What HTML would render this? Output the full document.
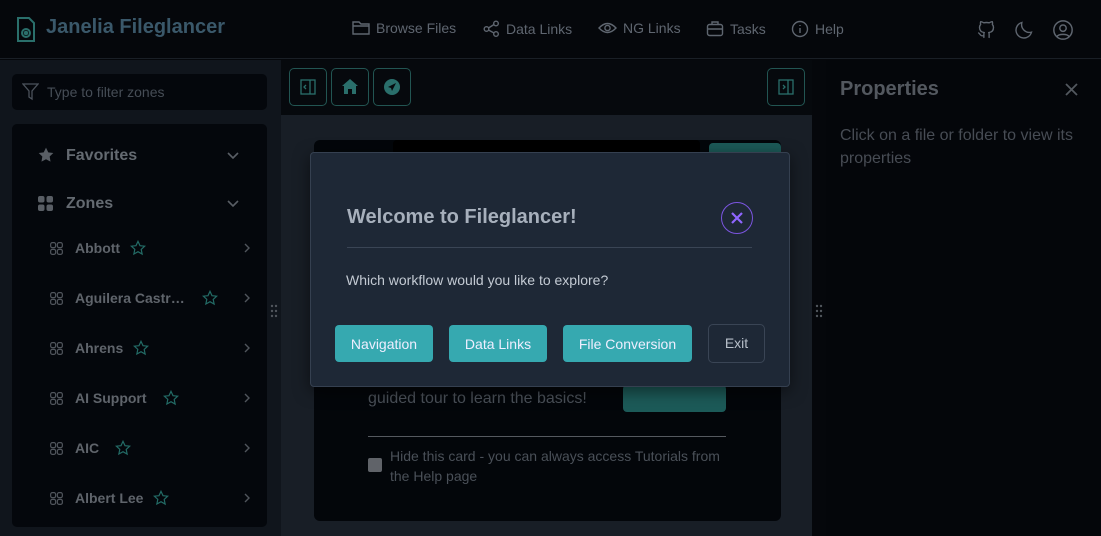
<!DOCTYPE html>
<html><head><meta charset="utf-8"><style>
*{box-sizing:border-box;margin:0;padding:0}
body{width:1101px;height:536px;overflow:hidden;background:#05070b;font-family:"Liberation Sans",sans-serif;position:relative}
.a{position:absolute}
.nav{color:#5f6670;font-size:14px;display:flex;align-items:center;gap:6px}
svg{display:block}
.zone{position:absolute;left:50px;width:210px;height:20px;display:flex;align-items:center;color:#5f646b;font-weight:bold;font-size:14px}
.zone svg{margin-right:12px}
.btn{position:absolute;top:325px;height:37px;background:#36a9b0;color:#eef;border-radius:4px;font-size:14px;display:flex;align-items:center;justify-content:center}
.chev{position:absolute;left:244px}
</style></head><body>
<div class="a" style="left:0;top:0;width:1101px;height:59px;background:#05070b;border-bottom:1px solid #1a1f26"></div>
<svg class="a" style="left:16px;top:16px" width="20" height="27" viewBox="0 0 20 27" fill="none" stroke="#2a6f6b" stroke-width="2"><path d="M2 2h11l5 5v18H2z"/><circle cx="10" cy="17" r="4"/><circle cx="10" cy="17" r="1.3" fill="#2a6f6b"/></svg>
<div class="a" style="left:46px;top:16px;font-size:20px;font-weight:bold;color:#3a586a">Janelia Fileglancer</div>
<div class="a nav" style="left:352px;top:20px"><svg width="18" height="16" viewBox="0 0 18 16" fill="none" stroke="#5f6670" stroke-width="1.4"><path d="M1 2h6l2 2h8v10H1z M1 6h16"/></svg>Browse Files</div>
<div class="a nav" style="left:483px;top:20px"><svg width="17" height="17" viewBox="0 0 17 17" fill="none" stroke="#5f6670" stroke-width="1.4"><circle cx="3.5" cy="9" r="2.3"/><circle cx="13" cy="3.5" r="2.3"/><circle cx="13" cy="14" r="2.3"/><path d="M5.5 8l5.5-3.5M5.5 10l5.5 3"/></svg>Data Links</div>
<div class="a nav" style="left:598px;top:20px"><svg width="19" height="16" viewBox="0 0 19 16" fill="none" stroke="#5f6670" stroke-width="1.4"><path d="M1 8q8.5-9 17 0q-8.5 9-17 0z"/><circle cx="9.5" cy="8" r="2.6"/></svg>NG Links</div>
<div class="a nav" style="left:706px;top:20px"><svg width="18" height="17" viewBox="0 0 18 17" fill="none" stroke="#5f6670" stroke-width="1.4"><rect x="1.5" y="4.5" width="15" height="11" rx="2"/><path d="M6 4.5V2h6v2.5M1.5 9h15"/></svg>Tasks</div>
<div class="a nav" style="left:791px;top:20px"><svg width="18" height="18" viewBox="0 0 18 18" fill="none" stroke="#5f6670" stroke-width="1.4"><circle cx="9" cy="9" r="7.5"/><path d="M9 8v5M9 5v1"/></svg>Help</div>
<svg class="a" style="left:976px;top:19px" width="21" height="21" viewBox="0 0 24 24" fill="none" stroke="#5f6670" stroke-width="1.6" stroke-linecap="round" stroke-linejoin="round"><path d="M9 19c-4.3 1.4-4.3-2.5-6-3m12 5v-3.5c0-1 .1-1.4-.5-2 2.8-.3 5.5-1.4 5.5-6a4.6 4.6 0 00-1.3-3.2 4.2 4.2 0 00-.1-3.2s-1.1-.3-3.5 1.3a12.3 12.3 0 00-6.2 0C6.5 2.8 5.4 3.1 5.4 3.1a4.2 4.2 0 00-.1 3.2A4.6 4.6 0 004 9.5c0 4.6 2.7 5.7 5.5 6-.6.6-.6 1.2-.5 2V21"/></svg>
<svg class="a" style="left:1014px;top:19px" width="21" height="21" viewBox="0 0 24 24" fill="none" stroke="#5f6670" stroke-width="1.6"><path d="M20 15A9 9 0 019 4a9 9 0 1011 11z"/></svg>
<svg class="a" style="left:1052px;top:19px" width="22" height="22" viewBox="0 0 24 24" fill="none" stroke="#5f6670" stroke-width="1.6"><circle cx="12" cy="12" r="10"/><circle cx="12" cy="10" r="3.5"/><path d="M5.5 19c2-3 11-3 13 0"/></svg>
<div class="a" style="left:0;top:60px;width:281px;height:476px;background:#10151c"></div>
<div class="a" style="left:12px;top:74px;width:255px;height:36px;background:#04070c;border-radius:5px"></div>
<svg class="a" style="left:22px;top:83px" width="17" height="18" viewBox="0 0 17 18" fill="none" stroke="#4b525b" stroke-width="1.3"><path d="M1 1h15l-6 7v8l-3-2V8z"/></svg>
<div class="a" style="left:47px;top:84px;font-size:14px;color:#464d56">Type to filter zones</div>
<div class="a" style="left:12px;top:124px;width:255px;height:403px;background:#04070c;border-radius:5px"></div>
<svg class="a" style="left:38px;top:147px" width="16" height="16" viewBox="0 0 24 24" fill="#595e65"><path d="M12 1l3.4 7 7.6 1-5.5 5.3 1.3 7.7L12 18.3 5.2 22l1.3-7.7L1 9l7.6-1z"/></svg>
<div class="a" style="left:66px;top:147px;color:#646a71;font-size:16px;font-weight:bold">Favorites</div>
<svg class="a" style="left:227px;top:152px" width="12" height="8" viewBox="0 0 12 8" fill="none" stroke="#595e65" stroke-width="1.6"><path d="M1 1l5 5 5-5"/></svg>
<svg class="a" style="left:38px;top:196px" width="15" height="15" viewBox="0 0 15 15" fill="#595e65"><rect width="6.5" height="6.5" rx="2"/><rect x="8.5" width="6.5" height="6.5" rx="2"/><rect y="8.5" width="6.5" height="6.5" rx="2"/><rect x="8.5" y="8.5" width="6.5" height="6.5" rx="2"/></svg>
<div class="a" style="left:66px;top:195px;color:#646a71;font-size:16px;font-weight:bold">Zones</div>
<svg class="a" style="left:227px;top:200px" width="12" height="8" viewBox="0 0 12 8" fill="none" stroke="#595e65" stroke-width="1.6"><path d="M1 1l5 5 5-5"/></svg>
<svg width="0" height="0" style="position:absolute"><defs>
<symbol id="g" viewBox="0 0 12 12"><g fill="none" stroke="#50555c" stroke-width="1.1"><rect x=".6" y=".6" width="4.6" height="4.6" rx="1.5"/><rect x="6.8" y=".6" width="4.6" height="4.6" rx="1.5"/><rect x=".6" y="6.8" width="4.6" height="4.6" rx="1.5"/><rect x="6.8" y="6.8" width="4.6" height="4.6" rx="1.5"/></g></symbol>
<symbol id="s" viewBox="0 0 24 24"><path d="M12 2l3 6.5 7 .8-5.2 4.8 1.4 7L12 17.6 5.8 21l1.4-7L2 9.3l7-.8z" fill="none" stroke="#236b66" stroke-width="1.8"/></symbol>
</defs></svg>
<div class="zone" style="top:238px"><svg width="13" height="13"><use href="#g"/></svg>Abbott<svg width="16" height="16" style="margin-left:10px"><use href="#s"/></svg></div>
<div class="zone" style="top:288px"><svg width="13" height="13"><use href="#g"/></svg>Aguilera Castr…<svg width="16" height="16" style="margin-left:17px"><use href="#s"/></svg></div>
<div class="zone" style="top:338px"><svg width="13" height="13"><use href="#g"/></svg>Ahrens<svg width="16" height="16" style="margin-left:10px"><use href="#s"/></svg></div>
<div class="zone" style="top:388px"><svg width="13" height="13"><use href="#g"/></svg>AI Support<svg width="16" height="16" style="margin-left:16px"><use href="#s"/></svg></div>
<div class="zone" style="top:438px"><svg width="13" height="13"><use href="#g"/></svg>AIC<svg width="16" height="16" style="margin-left:16px"><use href="#s"/></svg></div>
<div class="zone" style="top:488px"><svg width="13" height="13"><use href="#g"/></svg>Albert Lee<svg width="16" height="16" style="margin-left:10px"><use href="#s"/></svg></div>
<svg class="chev" style="top:243px" width="6" height="10" viewBox="0 0 6 10" fill="none" stroke="#50555c" stroke-width="1.4"><path d="M1 1l4 4-4 4"/></svg>
<svg class="chev" style="top:293px" width="6" height="10" viewBox="0 0 6 10" fill="none" stroke="#50555c" stroke-width="1.4"><path d="M1 1l4 4-4 4"/></svg>
<svg class="chev" style="top:343px" width="6" height="10" viewBox="0 0 6 10" fill="none" stroke="#50555c" stroke-width="1.4"><path d="M1 1l4 4-4 4"/></svg>
<svg class="chev" style="top:393px" width="6" height="10" viewBox="0 0 6 10" fill="none" stroke="#50555c" stroke-width="1.4"><path d="M1 1l4 4-4 4"/></svg>
<svg class="chev" style="top:443px" width="6" height="10" viewBox="0 0 6 10" fill="none" stroke="#50555c" stroke-width="1.4"><path d="M1 1l4 4-4 4"/></svg>
<svg class="chev" style="top:493px" width="6" height="10" viewBox="0 0 6 10" fill="none" stroke="#50555c" stroke-width="1.4"><path d="M1 1l4 4-4 4"/></svg>
<svg class="a" style="left:270px;top:304px" width="8" height="14" fill="#50555c"><circle cx="2" cy="2" r="1.2"/><circle cx="6" cy="2" r="1.2"/><circle cx="2" cy="7" r="1.2"/><circle cx="6" cy="7" r="1.2"/><circle cx="2" cy="12" r="1.2"/><circle cx="6" cy="12" r="1.2"/></svg>
<div class="a" style="left:281px;top:60px;width:531px;height:476px;background:#181e26"></div>
<div class="a" style="left:281px;top:60px;width:531px;height:55px;background:#06090d"></div>
<div class="a" style="left:289px;top:68px;width:38px;height:38px;border:1px solid #225552;border-radius:5px"></div>
<svg class="a" style="left:300px;top:79px" width="16" height="16" viewBox="0 0 16 16" fill="none" stroke="#2a6f6b" stroke-width="1.3"><rect x="1" y="1" width="14" height="14"/><path d="M10 1v14M6 6l-2 2 2 2"/></svg>
<div class="a" style="left:331px;top:68px;width:38px;height:38px;border:1px solid #225552;border-radius:5px"></div>
<svg class="a" style="left:342px;top:79px" width="16" height="15" viewBox="0 0 16 15" fill="#2a6f6b"><path d="M8 0l8 7h-2v8h-4v-5H6v5H2V7H0z"/></svg>
<div class="a" style="left:373px;top:68px;width:38px;height:38px;border:1px solid #225552;border-radius:5px"></div>
<svg class="a" style="left:384px;top:79px" width="16" height="16" viewBox="0 0 16 16"><circle cx="8" cy="8" r="8" fill="#2a6f6b"/><path d="M4 8l8-4-4 8-1-3z" fill="#06090d"/></svg>
<div class="a" style="left:767px;top:68px;width:38px;height:38px;border:1px solid #225552;border-radius:5px"></div>
<svg class="a" style="left:778px;top:79px" width="16" height="16" viewBox="0 0 16 16" fill="none" stroke="#2a6f6b" stroke-width="1.3"><rect x="1" y="1" width="14" height="14"/><path d="M10 1v14M5 6l2 2-2 2"/></svg>
<div class="a" style="left:314px;top:140px;width:467px;height:381px;background:#03060a;border-radius:6px"></div>
<div class="a" style="left:393px;top:140px;width:307px;height:20px;background:#000;border-radius:4px"></div>
<div class="a" style="left:709px;top:143px;width:72px;height:20px;background:#1c5a58;border-radius:4px"></div>
<div class="a" style="left:623px;top:385px;width:103px;height:27px;background:#1c5a58;border-radius:4px"></div>
<div class="a" style="left:368px;top:390px;font-size:16px;color:#4a5058">guided tour to learn the basics!</div>
<div class="a" style="left:368px;top:436px;width:358px;height:1px;background:#55595f"></div>
<div class="a" style="left:368px;top:458px;width:14px;height:14px;background:#606369;border-radius:2px"></div>
<div class="a" style="left:390px;top:446px;font-size:14px;color:#4a5058;line-height:20px;width:340px">Hide this card - you can always access Tutorials from the Help page</div>
<svg class="a" style="left:815px;top:304px" width="8" height="14" fill="#50555c"><circle cx="2" cy="2" r="1.2"/><circle cx="6" cy="2" r="1.2"/><circle cx="2" cy="7" r="1.2"/><circle cx="6" cy="7" r="1.2"/><circle cx="2" cy="12" r="1.2"/><circle cx="6" cy="12" r="1.2"/></svg>
<div class="a" style="left:826px;top:60px;width:275px;height:476px;background:#04060a"></div>
<div class="a" style="left:840px;top:78px;font-size:20px;font-weight:bold;color:#53585f">Properties</div>
<svg class="a" style="left:1065px;top:83px" width="13" height="13" viewBox="0 0 13 13" stroke="#53585f" stroke-width="1.8"><path d="M1 1l11 11M12 1L1 12"/></svg>
<div class="a" style="left:840px;top:124px;font-size:16px;color:#474c54;line-height:23px;width:250px">Click on a file or folder to view its properties</div>
<div class="a" style="left:310px;top:152px;width:480px;height:235px;background:#1e2836;border:1px solid #354050;border-radius:4px;box-shadow:0 4px 16px rgba(0,0,0,.5)"></div>
<div class="a" style="left:347px;top:206px;font-size:20px;font-weight:bold;color:#a7b0bc">Welcome to Fileglancer!</div>
<div class="a" style="left:721px;top:202px;width:32px;height:32px;border:1.5px solid #7b55e0;border-radius:50%"></div>
<svg class="a" style="left:731px;top:212px" width="12" height="12" viewBox="0 0 12 12" stroke="#8f66ff" stroke-width="2.2"><path d="M1 1l10 10M11 1L1 11"/></svg>
<div class="a" style="left:347px;top:247px;width:405px;height:1px;background:#3a4555"></div>
<div class="a" style="left:346px;top:272px;font-size:14px;color:#c3cad3">Which workflow would you like to explore?</div>
<div class="btn" style="left:335px;width:98px">Navigation</div>
<div class="btn" style="left:449px;width:98px">Data Links</div>
<div class="btn" style="left:563px;width:129px">File Conversion</div>
<div class="a" style="left:708px;top:324px;width:57px;height:39px;border:1px solid #3a4555;border-radius:5px;color:#b7bfc9;font-size:14px;text-align:center;line-height:37px">Exit</div>
</body></html>
